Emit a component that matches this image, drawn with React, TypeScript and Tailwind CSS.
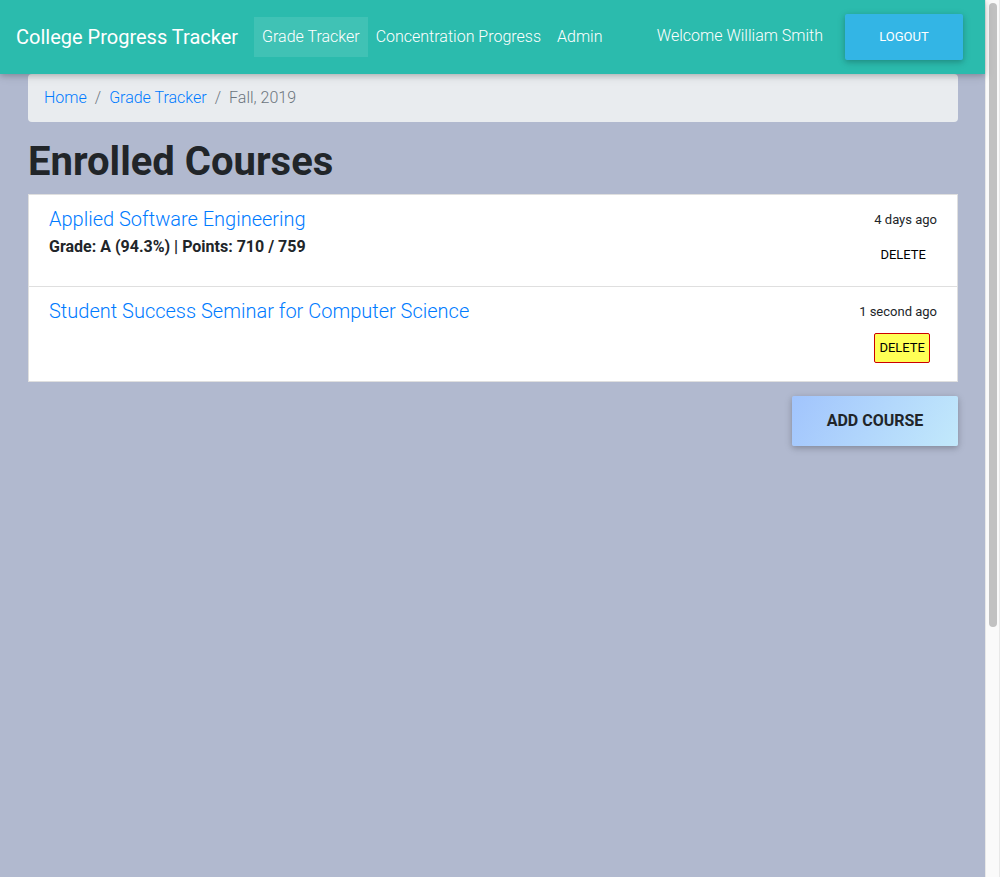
type Course = {
  name: string;
  summary?: string;
  updated: string;
  highlighted?: boolean;
};

const navLinks = [
  { label: "Grade Tracker", active: true },
  { label: "Concentration Progress", active: false },
  { label: "Admin", active: false },
];

const courses: Course[] = [
  {
    name: "Applied Software Engineering",
    summary: "Grade: A (94.3%) | Points: 710 / 759",
    updated: "4 days ago",
  },
  {
    name: "Student Success Seminar for Computer Science",
    updated: "1 second ago",
    highlighted: true,
  },
];

const raised = "shadow-[0_2px_5px_0_rgba(0,0,0,0.16),0_2px_10px_0_rgba(0,0,0,0.12)]";

function Navbar() {
  return (
    <nav
      className={`relative z-10 flex items-center bg-[#2bbbad] px-4 py-3.5 text-white ${raised}`}
    >
      <a href="#" className="mr-4 text-xl leading-[30px] font-normal">
        College Progress Tracker
      </a>
      <ul className="flex grow">
        {navLinks.map((link) => (
          <li key={link.label}>
            <a
              href="#"
              className={
                link.active
                  ? "block bg-white/10 p-2 leading-6"
                  : "block p-2 leading-6"
              }
            >
              {link.label}
            </a>
          </li>
        ))}
      </ul>
      <span className="mr-[22px] pb-0.5">Welcome William Smith</span>
      <button
        type="button"
        className={`mr-1.5 h-[46px] w-[118px] rounded-xs bg-[#33b5e5] text-[13px] font-normal ${raised}`}
      >
        LOGOUT
      </button>
    </nav>
  );
}

function Breadcrumb() {
  return (
    <nav aria-label="Breadcrumb">
      <ol className="flex gap-2 rounded bg-[#e9ecef] px-4 py-3 text-[#6c757d]">
        <li>
          <a href="#" className="text-[#007bff]">Home</a>
        </li>
        <li aria-hidden="true">/</li>
        <li>
          <a href="#" className="text-[#007bff]">Grade Tracker</a>
        </li>
        <li aria-hidden="true">/</li>
        <li aria-current="page">Fall, 2019</li>
      </ol>
    </nav>
  );
}

function CourseRow({ course }: { course: Course }) {
  return (
    <li className="flex justify-between px-5 pt-3 pb-[17px] last:pb-[18px]">
      <div>
        <h2 className="mb-1 text-xl leading-6">
          <a href="#" className="text-[#007bff]">{course.name}</a>
        </h2>
        {course.summary && <p className="leading-6 font-bold">{course.summary}</p>}
      </div>
      <div className="flex flex-col items-end gap-2">
        <small className="text-[13px] leading-[26px] font-normal">{course.updated}</small>
        <button
          type="button"
          className={
            course.highlighted
              ? "mr-[7px] rounded-xs border border-[#c00] bg-[#ffff55] p-1 text-[13px] leading-5 font-normal text-black"
              : "mr-[7px] rounded-xs p-1 text-[13px] leading-5 font-normal text-black"
          }
        >
          DELETE
        </button>
      </div>
    </li>
  );
}

export default function App() {
  return (
    <div className="flex min-h-screen bg-[#b1b9cf] font-[Roboto,sans-serif] text-base font-light text-[#212529]">
      <div className="min-w-0 grow">
        <Navbar />
        <main className="pr-[27px] pl-7">
          <Breadcrumb />
          <h1 className="mt-4 mb-2 text-[40px] leading-12 font-bold">Enrolled Courses</h1>
          <ul className="divide-y divide-[#dfdfdf] border border-[#dfdfdf] bg-white">
            {courses.map((course) => (
              <CourseRow key={course.name} course={course} />
            ))}
          </ul>
          <div className="mt-3.5 flex justify-end">
            <button
              type="button"
              className={`h-[50px] w-[166px] rounded-xs bg-[linear-gradient(120deg,#a1c4fd_0%,#c2e9fb_100%)] text-base font-bold ${raised}`}
            >
              ADD COURSE
            </button>
          </div>
        </main>
      </div>
      <div
        aria-hidden="true"
        className="w-[15px] shrink-0 border-x border-[#e8e8e8] bg-[#fafafa] pt-[3px] pr-0.5 pl-[3px]"
      >
        <div className="h-[624px] w-2 rounded-full bg-[#c1c1c1]" />
      </div>
    </div>
  );
}
